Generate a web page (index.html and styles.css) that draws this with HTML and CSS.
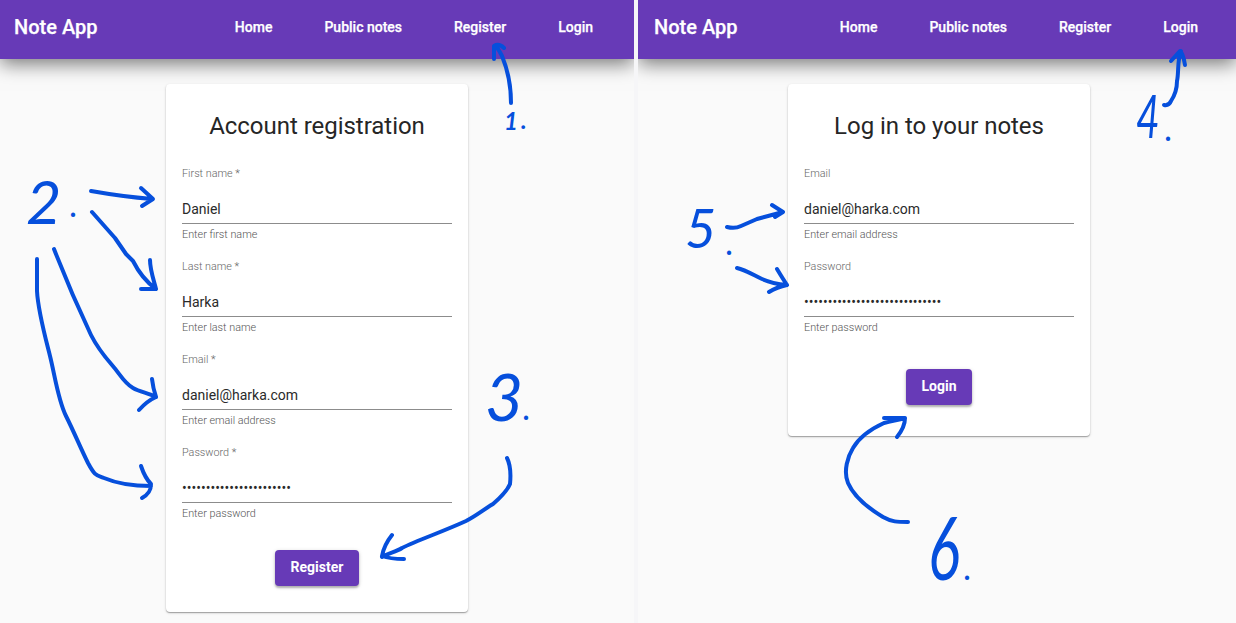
FILE: index.html
```html
<!DOCTYPE html>
<html lang="en">
<head>
<meta charset="utf-8">
<title>Note App</title>
<link rel="stylesheet" href="styles.css">
</head>
<body>
<main class="board">
  <section class="pane pane-register">
    <header class="toolbar">
      <span class="brand">Note App</span>
      <nav class="nav"><a>Home</a><a>Public notes</a><a>Register</a><a>Login</a></nav>
    </header>
    <form class="card">
      <h1 class="title">Account registration</h1>
      <div class="field"><label class="label">First name *</label><div class="value">Daniel</div><div class="hint">Enter first name</div></div>
      <div class="field"><label class="label">Last name *</label><div class="value">Harka</div><div class="hint">Enter last name</div></div>
      <div class="field"><label class="label">Email *</label><div class="value">daniel@harka.com</div><div class="hint">Enter email address</div></div>
      <div class="field"><label class="label">Password *</label><div class="value secret">•••••••••••••••••••••••</div><div class="hint">Enter password</div></div>
      <button class="button" type="button">Register</button>
    </form>
  </section>
  <section class="pane pane-login">
    <header class="toolbar">
      <span class="brand">Note App</span>
      <nav class="nav"><a>Home</a><a>Public notes</a><a>Register</a><a>Login</a></nav>
    </header>
    <form class="card">
      <h1 class="title">Log in to your notes</h1>
      <div class="field"><label class="label">Email</label><div class="value">daniel@harka.com</div><div class="hint">Enter email address</div></div>
      <div class="field"><label class="label">Password</label><div class="value secret">•••••••••••••••••••••••••••••</div><div class="hint">Enter password</div></div>
      <button class="button" type="button">Login</button>
    </form>
  </section>
  <svg class="ink" width="1236" height="623" viewBox="0 0 1236 623">
    <g class="arrows">
      <path d="M511 103C511 88 509 73 502 56Q499 50 496 46M494 59V46Q499 43 504 48"/>
      <path d="M91 191C108 194 127 197 152 199M141 188L153 199L142 206"/>
      <path d="M92 212L115 238L126 254L133 261C139 273 145 281 156 289M150 260C150 270 154 281 156 289L141 289"/>
      <path d="M54 249C66 280 82 316 91 335C97 347 105 357 112 365C120 374 124 383 133 388C140 392 148 393 156 397M152 379Q153 388 156 397Q147 401 139 410"/>
      <path d="M37 259V291C38 311 46 340 50 356C55 376 58 400 66 416C75 434 80 447 88 463C95 476 96 475 104 478C118 484 132 486 151 486M141 466Q145 478 151 484C151 490 149 494 142 498"/>
      <path d="M507 458C510 464 511 474 510 484C507 491 500 498 493 504C483 510 476 516 466 521C442 532 418 540 402 548C396 552 389 553 382 557M392 535Q384 545 382 556Q390 559 404 559"/>
      <path d="M1164 105Q1169 106 1171 101Q1177 92 1177 81C1179 72 1177 61 1181 51M1171 61L1180 51Q1183 53 1185 65"/>
      <path d="M727 227Q735 229 741 226L757 219L783 212M772 205L783 212L775 217"/>
      <path d="M737 268C746 270 755 276 762 279C771 283 777 284 787 285M777 269Q783 279 787 285Q777 287 769 292"/>
      <path d="M908 522C897 522 892 522 883 517C868 508 854 497 848 483C843 471 848 456 853 448C860 436 873 428 884 423C892 421 897 420 905 418M884 418H905Q905 427 897 437"/>
    </g>
    <g class="steps">
      <text class="bold" font-size="24" x="504" y="130">1<tspan x="521" y="129">.</tspan></text>
      <text font-size="61" x="26" y="224">2<tspan class="dot" x="70" y="217">.</tspan></text>
      <text font-size="66" x="485" y="421">3<tspan class="dot" x="523" y="420">.</tspan></text>
      <text font-size="60" transform="translate(1136 138) scale(.68 1)">4</text>
      <text class="dot" x="1165" y="141">.</text>
      <text font-size="54" x="685" y="248">5<tspan class="dot" x="726" y="255">.</tspan></text>
      <text font-size="88" transform="translate(928 580) scale(.68 1)">6</text>
      <text class="dot" x="964" y="580">.</text>
    </g>
  </svg>
</main>
</body>
</html>
```
FILE: styles.css
```css
* { box-sizing: border-box; }
body { margin: 0; font-family: Roboto, sans-serif; background: #fafafa; }
.board { position: relative; display: grid; grid-template-columns: 634px 598px; column-gap: 4px; width: 1236px; height: 623px; background: #f6f6f8; overflow: hidden; }
.pane { background: #fafafa; overflow: hidden; }
.toolbar { display: flex; align-items: center; justify-content: space-between; height: 59px; padding: 0 41px 5px 14px; background: #673ab7; color: #fff; box-shadow: 0 5px 18px rgba(0,0,0,.52); }
.pane-login .toolbar { padding-left: 16px; padding-right: 38px; }
.brand { font-size: 20px; font-weight: 500; -webkit-text-stroke: .25px #fff; }
.nav { display: flex; gap: 52px; font-size: 14px; font-weight: 500; -webkit-text-stroke: .25px #fff; }
.card { display: flex; flex-direction: column; align-items: stretch; width: 302px; height: 528px; margin: 25px auto 0; padding: 26px 16px; background: #fff; border-radius: 4px; box-shadow: 0 1px 1px rgba(0,0,0,.28), 0 1px 3px rgba(0,0,0,.16); }
.pane-login .card { height: 352px; margin-left: 150px; }
.title { margin: 0 0 24px; font-size: 24px; line-height: 32px; font-weight: 400; letter-spacing: -.03px; text-align: center; color: #262626; }
.field { height: 93px; }
.label { display: block; padding-top: 1px; font-size: 10.8px; line-height: 14px; font-weight: 300; color: #666; }
.value { height: 43px; padding-top: 18px; border-bottom: 1px solid #8c8c8c; font-size: 14px; line-height: 20px; color: #2a2a2a; }
.secret { font-size: 14px; letter-spacing: .01px; }
.hint { padding-top: 4px; font-size: 10.8px; line-height: 14px; font-weight: 300; color: #555; }
.button { align-self: center; height: 36px; margin-top: 12px; padding: 0 16px 2px; border: 0; border-radius: 4px; background: #673ab7; color: #fff; font: 700 14px Roboto, sans-serif; box-shadow: 0 2px 2px rgba(0,0,0,.24), 0 1px 4px rgba(0,0,0,.16); }
.pane-login .button { width: 66px; margin-top: 17px; padding-inline: 0; }
.ink { position: absolute; inset: 0; }
.arrows { fill: none; stroke: #064fdc; stroke-width: 4; stroke-linecap: round; stroke-linejoin: round; }
.steps { fill: #064fdc; font-family: Lato, sans-serif; font-style: italic; }
.bold { font-weight: 700; }
.dot { font-size: 34px; }
```
